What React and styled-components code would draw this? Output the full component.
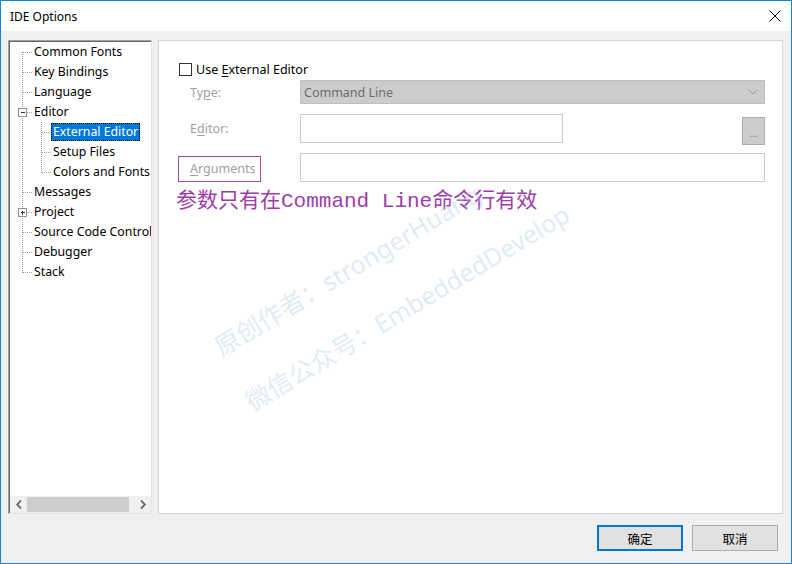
import React from "react";
import styled, { createGlobalStyle } from "styled-components";

const Global = createGlobalStyle`
  html, body { margin: 0; padding: 0; background: #fff; }
  body { font-family: "Noto Sans", "Noto Sans CJK SC", sans-serif; }
  * { box-sizing: border-box; }
`;

const Window = styled.div`
  width: 792px;
  height: 564px;
  border: 1px solid #1883d7;
  display: flex;
  flex-direction: column;
  background: #f0f0f0;
  overflow: hidden;
`;

const TitleBar = styled.div`
  height: 30px;
  flex: none;
  background: #fff;
  display: flex;
  align-items: center;
  justify-content: space-between;
  padding: 0 9px 0 9px;
  font-size: 12px;
  color: #000;
`;

const CloseBtn = styled.div`
  width: 14px;
  height: 14px;
  display: flex;
  align-items: center;
  justify-content: center;
`;

const Body = styled.div`
  flex: 1;
  display: flex;
  flex-direction: column;
  padding: 9px 8px 0 7px;
`;

const Main = styled.div`
  height: 474px;
  display: flex;
  gap: 6px;
`;

const TreePanel = styled.div`
  width: 144px;
  flex: none;
  border-style: solid;
  border-width: 1px;
  border-color: #a0a0a0 #e3e3e3 #e3e3e3 #a0a0a0;
  box-shadow: inset 1px 1px 0 #696969;
  background: #fff;
  display: flex;
  flex-direction: column;
  padding: 1px 0 0 1px;
`;

const TreeList = styled.div`
  flex: 1;
  overflow: hidden;
`;

const Row = styled.div`
  height: 20px;
  display: flex;
  align-items: center;
  white-space: nowrap;
  font-size: 12.3px;
  color: #000;
`;

const Label = styled.span`
  height: 18px;
  line-height: 17px;
  padding: 0 2px;
  background: ${(p) => (p.$selected ? "#0078d7" : "transparent")};
  color: ${(p) => (p.$selected ? "#fff" : "#000")};
  outline: ${(p) => (p.$selected ? "1px dotted #000" : "none")};
  outline-offset: -1px;
`;

const ScrollBar = styled.div`
  height: 17px;
  flex: none;
  background: #f0f0f0;
  display: flex;
  align-items: center;
`;

const ScrollArrow = styled.div`
  width: 17px;
  height: 17px;
  flex: none;
  display: flex;
  align-items: center;
  justify-content: center;
`;

const ScrollTrack = styled.div`
  flex: 1;
  height: 15px;
  display: flex;
`;

const ScrollThumb = styled.div`
  width: 102px;
  height: 15px;
  background: #cdcdcd;
`;

const ContentPanel = styled.div`
  flex: 1;
  background: #fff;
  border: 1px solid #d4d4d4;
  position: relative;
  overflow: hidden;
  padding: 19px 17px 0 20px;
`;

const CheckRow = styled.label`
  display: flex;
  align-items: center;
  gap: 4px;
  font-size: 12.5px;
  color: #000;
  height: 18px;
`;

const CheckBox = styled.span`
  width: 13px;
  height: 13px;
  border: 1px solid #333;
  background: #fff;
  flex: none;
`;

const Form = styled.div`
  display: grid;
  grid-template-columns: 121px 1fr;
  grid-template-rows: 24px 29px 29px;
  row-gap: 10px;
  margin-top: 2px;
  align-items: center;
`;

const FieldLabel = styled.div`
  padding-left: 11px;
  font-size: 12.5px;
  color: #a0a0a0;
`;

const U = styled.span`
  text-decoration: underline;
  text-underline-offset: 2px;
`;

const Select = styled.div`
  height: 24px;
  background: #cccccc;
  border: 1px solid #bfbfbf;
  display: flex;
  align-items: center;
  justify-content: space-between;
  padding: 0 6px 0 3px;
  font-size: 12.5px;
  color: #6d6d6d;
`;

const EditorField = styled.div`
  display: flex;
  align-items: flex-start;
  height: 29px;
`;

const TextInput = styled.div`
  height: ${(p) => p.$h || 29}px;
  width: ${(p) => (p.$w ? `${p.$w}px` : "100%")};
  background: #fff;
  border: 1px solid #c8c8c8;
`;

const BrowseBtn = styled.div`
  margin-left: auto;
  margin-top: 3px;
  width: 23px;
  height: 28px;
  background: #cccccc;
  border: 1px solid #adadad;
  display: flex;
  align-items: center;
  justify-content: center;
  font-size: 10px;
  color: #808080;
  padding-top: 4px;
`;

const ArgButton = styled.div`
  width: 83px;
  height: 26px;
  margin-top: 2px;
  margin-left: -1px;
  border: 1px solid #a050a8;
  padding-left: 11px;
  display: flex;
  align-items: center;
  font-size: 12.5px;
  color: #a0a0a0;
`;

const Note = styled.div`
  margin-top: 7px;
  margin-left: -3px;
  font-family: "Liberation Mono", "Noto Sans CJK SC", monospace;
  font-size: 21px;
  line-height: 26px;
  color: #9e3cab;
  white-space: nowrap;
`;

const Watermark = styled.div`
  position: absolute;
  left: ${(p) => p.$x}px;
  top: ${(p) => p.$y}px;
  transform-origin: 0 100%;
  transform: rotate(-31deg);
  font-family: "Noto Sans", "Noto Sans CJK SC", sans-serif;
  font-size: 25px;
  line-height: 30px;
  color: rgba(170, 205, 235, 0.4);
  white-space: nowrap;
  pointer-events: none;
`;

const Footer = styled.div`
  flex: 1;
  display: flex;
  justify-content: flex-end;
  align-items: flex-start;
  gap: 9px;
  padding: 11px 5px 0 0;
`;

const DlgButton = styled.div`
  width: 86px;
  height: 26px;
  background: #e1e1e1;
  border: ${(p) => (p.$default ? "2px solid #0078d7" : "1px solid #adadad")};
  display: flex;
  align-items: center;
  justify-content: center;
  font-family: "Noto Sans CJK SC", sans-serif;
  font-size: 12.5px;
  color: #000;
`;

const DOT = "#a0a0a0";

function Guide({ line }) {
  return (
    <svg width="19" height="20" style={{ flex: "none", display: "block" }} shapeRendering="crispEdges">
      {line && <line x1="12.5" y1="0" x2="12.5" y2="20" stroke={DOT} strokeDasharray="1 1" />}
    </svg>
  );
}

function Connector({ type, expander }) {
  const y1 = type === "first" ? 10 : 0;
  const y2 = type === "last" ? 11 : 20;
  return (
    <svg width="22" height="20" style={{ flex: "none", display: "block" }} shapeRendering="crispEdges">
      <line x1="12.5" y1={y1} x2="12.5" y2={y2} stroke={DOT} strokeDasharray="1 1" />
      <line x1="13" y1="10.5" x2="22" y2="10.5" stroke={DOT} strokeDasharray="1 1" />
      {expander && (
        <g>
          <rect x="8.5" y="6.5" width="8" height="8" fill="#fff" stroke="#919191" />
          <line x1="10.5" y1="10.5" x2="15" y2="10.5" stroke="#1e395b" />
          {expander === "plus" && <line x1="12.5" y1="8.5" x2="12.5" y2="13" stroke="#1e395b" />}
        </g>
      )}
    </svg>
  );
}

const items = [
  { label: "Common Fonts", conn: "first" },
  { label: "Key Bindings", conn: "mid" },
  { label: "Language", conn: "mid" },
  { label: "Editor", conn: "mid", expander: "minus" },
  { label: "External Editor", level: 2, conn: "mid", selected: true },
  { label: "Setup Files", level: 2, conn: "mid" },
  { label: "Colors and Fonts", level: 2, conn: "last" },
  { label: "Messages", conn: "mid" },
  { label: "Project", conn: "mid", expander: "plus" },
  { label: "Source Code Control", conn: "mid" },
  { label: "Debugger", conn: "mid" },
  { label: "Stack", conn: "last" },
];

export default function App() {
  return (
    <>
      <Global />
      <Window>
        <TitleBar>
          <span>IDE Options</span>
          <CloseBtn>
            <svg width="12" height="12" viewBox="0 0 12 12">
              <path d="M0.5 0.5 L11.5 11.5 M11.5 0.5 L0.5 11.5" stroke="#000" strokeWidth="1" fill="none" />
            </svg>
          </CloseBtn>
        </TitleBar>
        <Body>
          <Main>
            <TreePanel>
              <TreeList>
                {items.map((it) => (
                  <Row key={it.label}>
                    {it.level === 2 && <Guide line />}
                    <Connector type={it.conn} expander={it.expander} />
                    <Label $selected={it.selected}>{it.label}</Label>
                  </Row>
                ))}
              </TreeList>
              <ScrollBar>
                <ScrollArrow>
                  <svg width="6" height="9" viewBox="0 0 6 9">
                    <path d="M5 0.5 L1.2 4.5 L5 8.5" stroke="#606060" strokeWidth="1.8" fill="none" />
                  </svg>
                </ScrollArrow>
                <ScrollTrack>
                  <ScrollThumb />
                </ScrollTrack>
                <ScrollArrow>
                  <svg width="6" height="9" viewBox="0 0 6 9">
                    <path d="M1 0.5 L4.8 4.5 L1 8.5" stroke="#606060" strokeWidth="1.8" fill="none" />
                  </svg>
                </ScrollArrow>
              </ScrollBar>
            </TreePanel>
            <ContentPanel>
              <CheckRow>
                <CheckBox />
                <span>
                  Use <U>E</U>xternal Editor
                </span>
              </CheckRow>
              <Form>
                <FieldLabel>
                  Ty<U>p</U>e:
                </FieldLabel>
                <Select>
                  <span>Command Line</span>
                  <svg width="10" height="6" viewBox="0 0 10 6">
                    <path d="M0.5 0.5 L5 5 L9.5 0.5" stroke="#9a9a9a" strokeWidth="1" fill="none" />
                  </svg>
                </Select>
                <FieldLabel>
                  E<U>d</U>itor:
                </FieldLabel>
                <EditorField>
                  <TextInput $w={263} />
                  <BrowseBtn>...</BrowseBtn>
                </EditorField>
                <ArgButton>
                  <span>
                    <U>A</U>rguments
                  </span>
                </ArgButton>
                <TextInput />
              </Form>
              <Note>参数只有在Command Line命令行有效</Note>
              <Watermark $x={65} $y={290}>原创作者：strongerHuang</Watermark>
              <Watermark $x={96} $y={345}>微信公众号：EmbeddedDevelop</Watermark>
            </ContentPanel>
          </Main>
          <Footer>
            <DlgButton $default>确定</DlgButton>
            <DlgButton>取消</DlgButton>
          </Footer>
        </Body>
      </Window>
    </>
  );
}
